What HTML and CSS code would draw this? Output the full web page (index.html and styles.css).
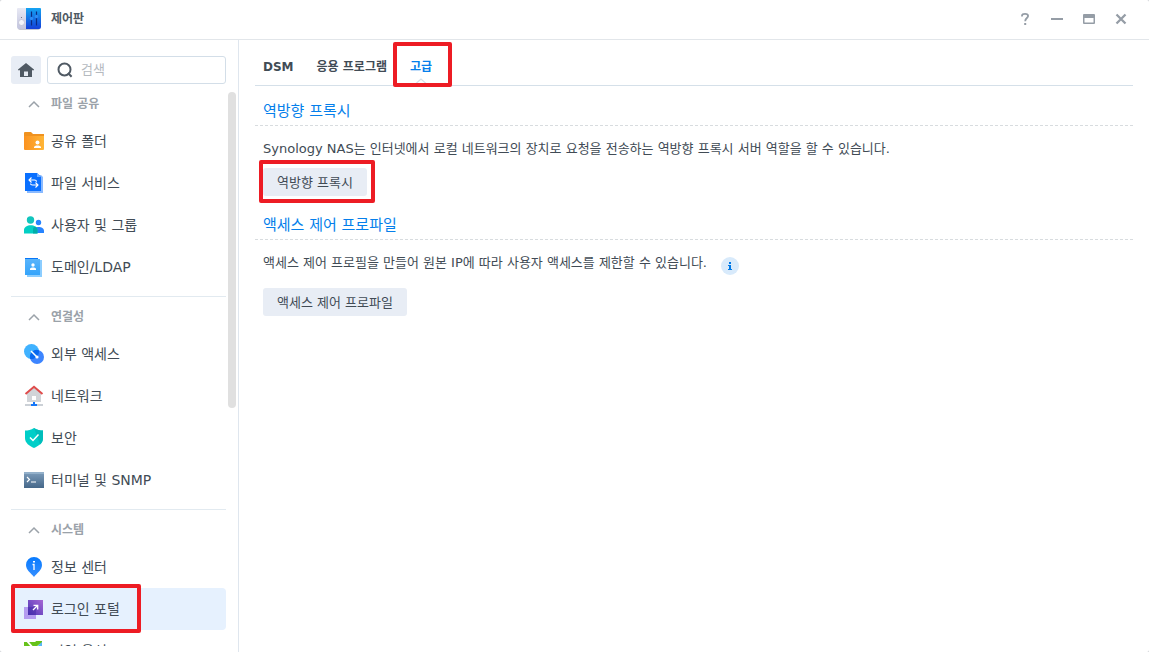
FILE: index.html
```
<!DOCTYPE html>
<html lang="ko">
<head>
  <meta charset="UTF-8">
  <meta name="viewport" content="width=device-width, initial-scale=1.0">
  <title>제어판</title>
  <link rel="stylesheet" href="styles.css">
</head>
<body>
  <div class="window">
    <header class="titlebar">
      <svg class="logo" width="24" height="22" viewBox="0 0 24 22">
        <defs>
          <linearGradient id="gBlue" x1="0" y1="0" x2="0" y2="1"><stop offset="0" stop-color="#15a4f2"/><stop offset="1" stop-color="#1440d8"/></linearGradient>
          <linearGradient id="gSilver" x1="0" y1="0" x2="0" y2="1"><stop offset="0" stop-color="#e8e9f4"/><stop offset="1" stop-color="#c3c5de"/></linearGradient>
        </defs>
        <rect x="1" y="2" width="22" height="20" rx="2" fill="#c4c6cf"/>
        <path d="M1 0h8v21H2a2 2 0 0 1-2-2V1a1 1 0 0 1 1-1z" fill="url(#gSilver)"/>
        <path d="M9 0h14a1 1 0 0 1 1 1v18a2 2 0 0 1-2 2H9z" fill="url(#gBlue)"/>
        <circle cx="4.500" cy="14.500" r="3" fill="#f3f4fa" stroke="#b4b6cc" stroke-width=".6"/>
        <circle cx="4.500" cy="9.500" r=".6" fill="#65687c"/>
        <path d="M14.500 3.500v14M19.500 3.500v14" stroke="#0c2a80" stroke-width="1.200"/>
        <circle cx="14.500" cy="10.500" r="1.700" fill="#2e8cf5"/>
        <circle cx="19.500" cy="8.500" r="1.700" fill="#2e8cf5"/>
      </svg>
      <h1>제어판</h1>
      <div class="window-buttons">
        <button type="button" aria-label="도움말">
          <svg width="12" height="14" viewBox="0 0 12 14"><path d="M3 4.600V3.800C3 2.500 4 1.800 6 1.800s3.100.8 3.100 2.200C9.100 6 6.200 6.200 6.200 9.200" fill="none" stroke="#959da6" stroke-width="1.800"/><path d="M5.200 11h2v2h-2z" fill="#959da6"/></svg>
        </button>
        <button type="button" aria-label="최소화">
          <svg width="12" height="12" viewBox="0 0 12 12"><path d="M0 5h12v2H0z" fill="#959da6"/></svg>
        </button>
        <button type="button" aria-label="최대화">
          <svg width="12" height="12" viewBox="0 0 12 12"><path d="M1 1h10a1 1 0 0 1 1 1v8a1 1 0 0 1-1 1H1a1 1 0 0 1-1-1V2a1 1 0 0 1 1-1zm.5 4v4.500h9V5z" fill="#959da6" fill-rule="evenodd"/></svg>
        </button>
        <button type="button" aria-label="닫기">
          <svg width="12" height="12" viewBox="0 0 12 12"><path d="M1.500 1.500l9 9M10.500 1.500l-9 9" stroke="#959da6" stroke-width="2.300"/></svg>
        </button>
      </div>
    </header>

    <div class="content">
      <aside class="sidebar">
        <div class="search-row">
          <button type="button" class="home" aria-label="홈">
            <svg width="16" height="14" viewBox="0 0 16 14"><path d="M8 0l8 6.500v.7h-2V14H2V7.200H0v-.7zM6 8.500V13h4V8.500z" fill="#505a64" fill-rule="evenodd"/></svg>
          </button>
          <label class="search">
            <svg width="16" height="16" viewBox="0 0 16 16" fill="none" stroke="#505a64" stroke-width="2"><circle cx="7.500" cy="7.500" r="6"/><path d="M11 11l3.600 3.800"/></svg>
            <input type="text" placeholder="검색" aria-label="검색">
          </label>
        </div>

        <div class="sidebar-body">
          <nav class="menu">
            <section class="group">
              <button type="button" class="group-title">
                <svg class="chevron" width="12" height="8" viewBox="0 0 12 8"><path d="M1 7l5-5 5 5"/></svg>파일 공유
              </button>
              <a href="#" class="item">
                <svg width="20" height="20" viewBox="0 0 20 20">
                  <defs><linearGradient id="gFolder"><stop offset="0" stop-color="#fb9220"/><stop offset="1" stop-color="#ffb637"/></linearGradient></defs>
                  <path d="M0 2a1 1 0 0 1 1-1h6l2 2h11v4H0z" fill="#f0921f"/>
                  <path d="M0 5h20v13a1 1 0 0 1-1 1H1a1 1 0 0 1-1-1z" fill="url(#gFolder)"/>
                  <circle cx="13.500" cy="11.500" r="2" fill="#fff"/><path d="M10 17v-.8c0-2.200 7-2.200 7 0v.8z" fill="#fff"/>
                </svg>
                공유 폴더
              </a>
              <a href="#" class="item">
                <svg width="20" height="20" viewBox="0 0 20 20">
                  <path d="M3 2h14l2 2v16H3z" fill="#8abaff"/>
                  <path d="M1 0h12l4 4v14H1z" fill="#0a70ff"/><path d="M13 0l4 4h-4z" fill="#6aaaff"/>
                  <path d="M7.500 4.500L5 7l2.500 2.500M5 7h5.500q2 0 2 1.800M11.500 9.500L14 12l-2.500 2.500M14 12H8.500q-2 0-2-1.500" fill="none" stroke="#fff" stroke-width="1.100"/>
                </svg>
                파일 서비스
              </a>
              <a href="#" class="item">
                <svg width="20" height="20" viewBox="0 0 20 20">
                  <path d="M9 18v-2c0-5 11-5.500 11 0v2z" fill="#2784ff"/><circle cx="14.500" cy="7.500" r="2.700" fill="#2784ff"/>
                  <circle cx="6.500" cy="5" r="3.700" fill="#12c5bd"/><path d="M0 18.500V15c0-6.500 13.500-6.500 13.500 0v3.500z" fill="#02cfc4"/>
                  <path d="M9 18.500V14c0-1.500 2-2.500 3-2 1 .8 1.500 1.800 1.500 3v3.500z" fill="#00aca9"/>
                </svg>
                사용자 및 그룹
              </a>
              <a href="#" class="item">
                <svg width="20" height="20" viewBox="0 0 20 20">
                  <defs><linearGradient id="gBook" x1="0" y1="0" x2="0" y2="1"><stop offset="0" stop-color="#59b4fb"/><stop offset="1" stop-color="#34a4fb"/></linearGradient></defs>
                  <path d="M3 3h15v17H3z" fill="#8bcdff"/><path d="M1 1h13v3H1z" fill="#0876f8"/>
                  <path d="M1 2h15v16H1z" fill="url(#gBook)"/>
                  <circle cx="9" cy="8" r="1.700" fill="#fff"/><path d="M6 13v-1c0-2 6-2 6 0v1z" fill="#fff"/>
                </svg>
                도메인/LDAP
              </a>
            </section>

            <section class="group">
              <button type="button" class="group-title">
                <svg class="chevron" width="12" height="8" viewBox="0 0 12 8"><path d="M1 7l5-5 5 5"/></svg>연결성
              </button>
              <a href="#" class="item">
                <svg width="20" height="20" viewBox="0 0 20 20">
                  <circle cx="7.500" cy="7.500" r="7.500" fill="#40b2ff"/><circle cx="13" cy="13" r="7" fill="#3d85ff"/>
                  <path d="M14.900 6.200A7 7 0 0 0 6.200 14.900 7.500 7.500 0 0 0 14.900 6.200z" fill="#0868ef"/>
                  <path d="M7 7l6 6" stroke="#fff" stroke-width="1.500"/><circle cx="13" cy="13" r="1.600" fill="#fff"/>
                </svg>
                외부 액세스
              </a>
              <a href="#" class="item">
                <svg width="20" height="22" viewBox="0 0 20 22">
                  <path d="M3 8l7-6 7 6v9H3z" fill="#d1d4d8"/><path d="M8 11h4v4H8z" fill="#fff"/>
                  <path d="M1.500 9L10 1.700 18.500 9" fill="none" stroke="#df4c4b" stroke-width="2"/>
                  <path d="M1 20h18" stroke="#cbd0d6" stroke-width="2"/><path d="M7 19h2v-2h2v2h2v2H7z" fill="#1677f8"/>
                </svg>
                네트워크
              </a>
              <a href="#" class="item">
                <svg width="20" height="20" viewBox="0 0 20 20">
                  <path d="M10 0c3 2 6 2.500 9 2.500V10c0 5-4.500 8-9 10-4.500-2-9-5-9-10V2.500C4 2.500 7 2 10 0z" fill="#00cec8"/>
                  <path d="M10 0c3 2 6 2.500 9 2.500V10c0 3-1 5-3 6.500z" fill="#00bdbb"/>
                  <path d="M6 9.500l3 3 5.500-6" fill="none" stroke="#fff" stroke-width="1.500"/>
                </svg>
                보안
              </a>
              <a href="#" class="item">
                <svg width="20" height="20" viewBox="0 0 20 20">
                  <defs><linearGradient id="gTerm" x1="0" y1="0" x2="0" y2="1"><stop offset="0" stop-color="#7d9dbb"/><stop offset="1" stop-color="#456789"/></linearGradient></defs>
                  <path d="M0 2h20v16H0z" fill="url(#gTerm)"/><path d="M0 2h20v2H0z" fill="#93b0ca"/>
                  <path d="M3 7l2.500 2.500L3 12M7 12h5" fill="none" stroke="#fff" stroke-width="1.200"/>
                </svg>
                터미널 및 SNMP
              </a>
            </section>

            <section class="group">
              <button type="button" class="group-title">
                <svg class="chevron" width="12" height="8" viewBox="0 0 12 8"><path d="M1 7l5-5 5 5"/></svg>시스템
              </button>
              <a href="#" class="item">
                <svg width="20" height="20" viewBox="0 0 20 20">
                  <defs><linearGradient id="gPin" x1="0" y1="0" x2="0" y2="1"><stop offset="0" stop-color="#087bff"/><stop offset="1" stop-color="#348eff"/></linearGradient></defs>
                  <path d="M10 0a8 8 0 0 1 8 8c0 5-5 8-8 12-3-4-8-7-8-12a8 8 0 0 1 8-8z" fill="url(#gPin)"/>
                  <path d="M9 4h2v1.500H9z" fill="#fff"/><path d="M8.500 7.500H10V13" fill="none" stroke="#fff" stroke-width="1.300"/>
                </svg>
                정보 센터
              </a>
              <a href="#" class="item active" aria-current="page">
                <svg width="20" height="20" viewBox="0 0 20 20">
                  <defs><linearGradient id="gPortal" x1="0" y1="1" x2="1" y2="0"><stop offset="0" stop-color="#4a35b5"/><stop offset="1" stop-color="#a667d4"/></linearGradient></defs>
                  <path d="M0 8h12v12H0z" fill="#b49cf0"/><path d="M4 1h15v15H4z" fill="url(#gPortal)"/>
                  <path d="M4 8h8v8H4z" fill="#3c26a3" opacity=".4"/>
                  <path d="M9 11l4.500-4.500M9.500 6.300h4.200v4.200" fill="none" stroke="#fff" stroke-width="1.300"/>
                </svg>
                로그인 포털
                <span class="mark mark-item"></span>
              </a>
              <a href="#" class="item">
                <svg width="20" height="20" viewBox="0 0 20 20">
                  <path d="M0 1h18v18H0z" fill="#66c21a"/><path d="M12 1h6v9l-8-4z" fill="#57b8f8"/>
                  <path d="M3 0l7 8 7-8" fill="none" stroke="#fff" stroke-width="1.800"/><path d="M12 0h6v1l-6 5-3-2z" fill="#66c21a"/>
                </svg>
                지역 옵션
              </a>
            </section>
          </nav>
          <div class="scrollbar"></div>
        </div>
      </aside>

      <main class="main">
        <div class="tabs" role="tablist">
          <button type="button" class="tab" role="tab">DSM</button>
          <button type="button" class="tab" role="tab">응용 프로그램</button>
          <button type="button" class="tab selected" role="tab" aria-selected="true">
            고급
            <svg class="caret" width="12" height="6" viewBox="0 0 12 6"><path d="M1 5.500l5-4.500 5 4.500" fill="none" stroke="#d3dfe8" stroke-width="1.200"/></svg>
            <span class="mark mark-tab"></span>
          </button>
        </div>

        <section class="panel">
          <h2>역방향 프록시</h2>
          <div class="fields">
            <p>Synology NAS는 인터넷에서 로컬 네트워크의 장치로 요청을 전송하는 역방향 프록시 서버 역할을 할 수 있습니다.</p>
            <button type="button" class="btn">역방향 프록시<span class="mark mark-btn"></span></button>
          </div>
        </section>

        <section class="panel">
          <h2>액세스 제어 프로파일</h2>
          <div class="fields">
            <div class="with-info">
              <p>액세스 제어 프로필을 만들어 원본 IP에 따라 사용자 액세스를 제한할 수 있습니다.</p>
              <button type="button" class="info" aria-label="정보">
                <svg width="18" height="18" viewBox="0 0 18 18"><circle cx="9" cy="9" r="9" fill="#d8eafb"/><path d="M8 5h2v2H8zM7 8h3v4h1v1H7v-1h1V9H7z" fill="#0079e6"/></svg>
              </button>
            </div>
            <button type="button" class="btn">액세스 제어 프로파일</button>
          </div>
        </section>
      </main>
    </div>
  </div>
</body>
</html>
```

FILE: styles.css
```
* {
  box-sizing: border-box;
}

body {
  margin: 0;
  background: #c9ccd1;
  color: #414b55;
  font-family: 'DejaVu Sans', 'Noto Sans CJK KR', sans-serif;
  font-size: 13px;
  line-height: 20px;
}

h1, h2, p {
  margin: 0;
}

button {
  margin: 0;
  padding: 0;
  border: none;
  background: none;
  color: inherit;
  font: inherit;
  cursor: pointer;
}

svg {
  display: block;
  flex: none;
}

.window {
  display: flex;
  flex-direction: column;
  height: 100vh;
  overflow: hidden;
  background: #fff;
  border-radius: 2px;
}

/* title bar */
.titlebar {
  display: flex;
  align-items: center;
  flex: none;
  gap: 10px;
  height: 40px;
  padding: 0 22px 2px 17px;
  border-bottom: 1px solid #e2e6ea;
}

.titlebar h1 {
  flex: 1;
  color: #505a64;
  font-size: 12px;
  line-height: 18px;
}

.window-buttons {
  display: flex;
  align-items: center;
  gap: 20px;
}

.content {
  display: flex;
  flex: 1;
  min-height: 0;
}

/* sidebar */
.sidebar {
  display: flex;
  flex-direction: column;
  flex: none;
  width: 239px;
  padding: 16px 2px 6px 11px;
  border-right: 1px solid #dfe6ee;
}

.search-row {
  display: flex;
  flex: none;
  gap: 6px;
  margin: 0 10px 8px 0;
}

.home {
  display: flex;
  align-items: center;
  justify-content: center;
  width: 30px;
  height: 28px;
  background: #e8edf5;
  border-radius: 3px;
}

.search {
  display: flex;
  align-items: center;
  flex: 1;
  gap: 8px;
  min-width: 0;
  height: 28px;
  padding: 0 9px;
  border: 1px solid #d3dee8;
  border-radius: 3px;
}

.search input {
  flex: 1;
  min-width: 0;
  padding: 0;
  border: none;
  outline: none;
  background: none;
  color: inherit;
  font: inherit;
}

.search input::placeholder {
  color: #b5babf;
}

.sidebar-body {
  display: flex;
  flex: 1;
  gap: 2px;
  min-height: 0;
}

.menu {
  flex: 1;
  overflow: hidden;
}

.scrollbar {
  width: 8px;
  height: 57%;
  background: #e0e0e0;
  border-radius: 4px;
}

.group {
  padding: 11px 0 8px;
  border-bottom: 1px solid #e2eaf0;
}

.group:first-child {
  padding-top: 3px;
}

.group-title {
  display: flex;
  align-items: center;
  gap: 11px;
  width: 100%;
  margin-bottom: 7px;
  padding-left: 17px;
  color: #9ba2a9;
  font-size: 12px;
  font-weight: bold;
  line-height: 18px;
}

.chevron {
  fill: none;
  stroke: #9ba2a9;
  stroke-width: 1.5;
}

.item {
  position: relative;
  display: flex;
  align-items: center;
  gap: 7px;
  height: 42px;
  padding-left: 13px;
  border-radius: 4px;
  color: #414b55;
  font-size: 14px;
  text-decoration: none;
}

.item.active {
  background: #e6f1fe;
}

/* main area */
.main {
  flex: 1;
  min-width: 0;
  padding: 0 16px;
}

.tabs {
  display: flex;
  gap: 23px;
  padding: 18px 8px 9px;
  border-bottom: 1px solid #d5e0e9;
}

.tab {
  position: relative;
  font-size: 12px;
  font-weight: bold;
  line-height: 18px;
}

.tab.selected {
  color: #057feb;
}

.caret {
  position: absolute;
  left: 5px;
  top: 20px;
}

.panel {
  padding-bottom: 4px;
}

.panel h2 {
  padding: 15px 8px 4px;
  border-bottom: 1px dashed #d8dcdf;
  color: #057feb;
  font-size: 15px;
  font-weight: normal;
  line-height: 20px;
}

.fields {
  display: flex;
  flex-direction: column;
  align-items: flex-start;
  gap: 9px;
  padding: 13px 8px 0;
}

.with-info {
  display: flex;
  align-items: flex-start;
  gap: 14px;
}

.info {
  padding: 4px 0;
}

.btn {
  position: relative;
  height: 28px;
  padding: 2px 14px 0;
  background: #e8edf5;
  border-radius: 3px;
}

/* red frames around the steps to click */
.mark {
  position: absolute;
  border: 4px solid #ed1c24;
  border-radius: 2px;
  pointer-events: none;
}

.mark-tab {
  inset: -16px -20px -11px -17px;
}

.mark-btn {
  inset: -8px -8px -7px -4px;
}

.mark-item {
  top: -4px;
  left: 0;
  width: 130px;
  height: 49px;
}
```
